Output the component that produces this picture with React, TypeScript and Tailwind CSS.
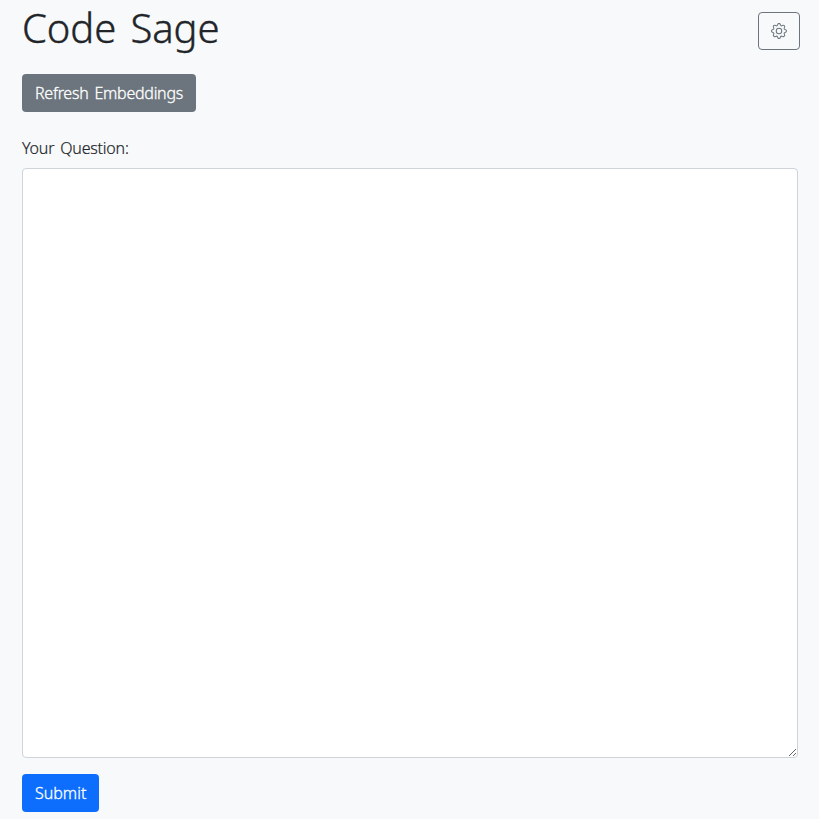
import { BsGear } from "react-icons/bs";

export default function App() {
  return (
    <main className="flex h-[819px] w-[819px] flex-col items-start overflow-hidden bg-[#f8f9fa] pl-[22px] text-base text-[#212529] [font-family:'Noto_Sans','Open_Sans',sans-serif]">
      <header className="flex h-[74px] w-[778px] items-start justify-between">
        <h1 className="mt-1 text-[40px] font-light leading-[48px] tracking-[-0.1px] whitespace-nowrap [-webkit-text-stroke:0.4px_#212529] [word-spacing:4px]">Code Sage</h1>
        <button aria-label="Settings" className="mt-3 flex h-[38px] w-[42px] items-center justify-center rounded border border-[#6c757d] text-[#6c757d]">
          <BsGear size={16} />
        </button>
      </header>
      <button className="h-[38px] w-[174px] rounded bg-[#6c757d] pl-[13px] text-left font-light tracking-[-0.25px] whitespace-nowrap text-white [-webkit-text-stroke:0.3px_white] [word-spacing:2px]">Refresh Embeddings</button>
      <label htmlFor="question" className="mt-6 h-8 font-light leading-6 tracking-[-0.2px] whitespace-nowrap [-webkit-text-stroke:0.2px_#212529] [word-spacing:2px]">Your Question:</label>
      <textarea id="question" className="block h-[590px] w-[776px] shrink-0 rounded border border-[#ced4da] bg-white px-3 py-1.5 outline-none" />
      <button className="mt-4 h-[38px] w-[77px] shrink-0 rounded bg-[#0d6efd] pl-[13px] text-left font-light text-white [-webkit-text-stroke:0.3px_white]">Submit</button>
    </main>
  );
}
